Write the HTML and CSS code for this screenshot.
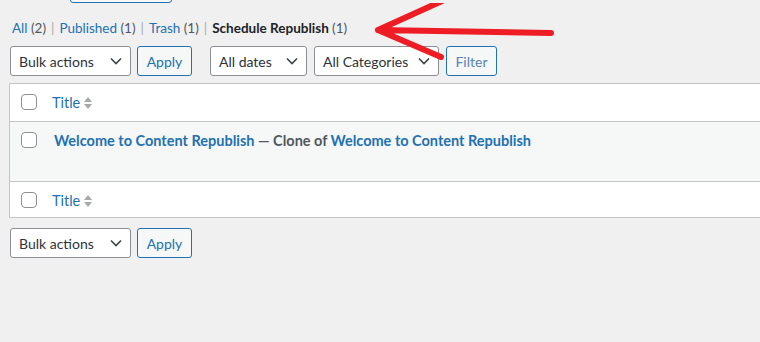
FILE: index.html
```html
<!DOCTYPE html>
<html lang="en">
<head>
  <meta charset="UTF-8">
  <title>Posts</title>
  <link rel="stylesheet" href="styles.css">
</head>
<body>

<div class="wrap">
  <div class="top-btn"></div>

  <div class="views-row">
    <ul class="views">
      <li><a href="#">All <span class="count">(2)</span></a><span class="sep">|</span></li>
      <li><a href="#">Published <span class="count">(1)</span></a><span class="sep">|</span></li>
      <li><a href="#">Trash <span class="count">(1)</span></a><span class="sep">|</span></li>
      <li><a href="#" class="current">Schedule Republish <span class="count">(1)</span></a></li>
    </ul>
    <svg class="arrow" width="190" height="60" viewBox="0 0 190 60">
      <path d="M8 27 L72 -2 M8 27 L181 30 M8 27 L71 54" fill="none" stroke="#ee1d25" stroke-width="6" stroke-linecap="round" stroke-linejoin="round"/>
    </svg>
  </div>

  <div class="tablenav">
    <div class="select w120">Bulk actions <span class="chev"><svg width="12" height="8" viewBox="0 0 12 8"><path d="M1 1.5 L6 6.5 L11 1.5" fill="none" stroke="#3c434a" stroke-width="1.6"/></svg></span></div>
    <button class="btn">Apply</button>
    <div class="select w96 ml">All dates <span class="chev"><svg width="12" height="8" viewBox="0 0 12 8"><path d="M1 1.5 L6 6.5 L11 1.5" fill="none" stroke="#3c434a" stroke-width="1.6"/></svg></span></div>
    <div class="select w124">All Categories <span class="chev"><svg width="12" height="8" viewBox="0 0 12 8"><path d="M1 1.5 L6 6.5 L11 1.5" fill="none" stroke="#3c434a" stroke-width="1.6"/></svg></span></div>
    <button class="btn btn-filter">Filter</button>
  </div>

  <div class="list">
    <div class="row head">
      <span class="cb"></span>
      <a href="#" class="col-title">Title <svg class="sort" width="8" height="14" viewBox="0 0 8 14"><path d="M4 1 L8 6 L0 6 Z M0 8 L8 8 L4 13 Z" fill="#a7aaad"/></svg></a>
    </div>
    <div class="row item">
      <span class="cb"></span>
      <div class="post-title"><a href="#">Welcome to Content Republish</a> — Clone of <a href="#">Welcome to Content Republish</a></div>
    </div>
    <div class="row foot">
      <span class="cb"></span>
      <a href="#" class="col-title">Title <svg class="sort" width="8" height="14" viewBox="0 0 8 14"><path d="M4 1 L8 6 L0 6 Z M0 8 L8 8 L4 13 Z" fill="#a7aaad"/></svg></a>
    </div>
  </div>

  <div class="tablenav bottom">
    <div class="select w120">Bulk actions <span class="chev"><svg width="12" height="8" viewBox="0 0 12 8"><path d="M1 1.5 L6 6.5 L11 1.5" fill="none" stroke="#3c434a" stroke-width="1.6"/></svg></span></div>
    <button class="btn">Apply</button>
  </div>
</div>

</body>
</html>
```

FILE: styles.css
```css
body {
  margin: 0;
  background-color: #f0f0f1;
  color: #3c434a;
  font-family: Lato, "Noto Sans", sans-serif;
  font-size: 13px;
  overflow: hidden;
}

a {
  color: #2271b1;
  text-decoration: none;
}

.wrap {
  padding-left: 10px;
  width: 1000px;
}

.top-btn {
  margin-left: 60px;
  margin-top: -27px;
  width: 100px;
  height: 28px;
  border: 1px solid #2271b1;
  border-radius: 3px;
  background-color: #f6f7f7;
}

.views-row {
  position: relative;
  height: 43px;
}

.views {
  list-style: none;
  margin: 0;
  padding: 12px 0 0 2px;
  display: flex;
  line-height: 26px;
  font-size: 13.5px;
  color: #a7aaad;
}

.views .sep {
  margin: 0 5px;
}

.views .count {
  color: #50575e;
}

.views .current {
  color: #1d2327;
  font-weight: 700;
}

.views .current .count {
  font-weight: 400;
}

.arrow {
  position: absolute;
  left: 360px;
  top: 0;
  z-index: 2;
}

.tablenav {
  display: flex;
  height: 30px;
  align-items: center;
}

.select {
  box-sizing: border-box;
  height: 30px;
  border: 1px solid #8c8f94;
  border-radius: 3px;
  background-color: #fff;
  color: #2c3338;
  font-size: 14px;
  padding-left: 8px;
  display: flex;
  align-items: center;
  position: relative;
}

.chev {
  position: absolute;
  right: 8px;
  top: 10px;
  line-height: 0;
}

.w120 { width: 121px; }
.w96 { width: 97px; }
.w124 { width: 125px; margin-left: 7px; }
.ml { margin-left: 18px; }

.btn {
  box-sizing: border-box;
  height: 30px;
  width: 55px;
  margin-left: 6px;
  padding: 0;
  border: 1px solid #2271b1;
  border-radius: 3px;
  background-color: #f6f7f7;
  color: #2271b1;
  font-family: inherit;
  font-size: 14px;
}

.btn-filter {
  width: 51px;
  margin-left: 7px;
  color: #5b83ad;
}

.list {
  margin: 7px 0 0 -1px;
  border: 1px solid #c3c4c7;
  background-color: #fff;
}

.row {
  display: flex;
  align-items: flex-start;
  padding-left: 11px;
}

.head {
  height: 37px;
  border-bottom: 1px solid #c3c4c7;
}

.item {
  height: 59px;
  background-color: #f6f7f7;
  border-bottom: 1px solid #c3c4c7;
}

.foot {
  height: 35px;
}

.cb {
  box-sizing: border-box;
  width: 16px;
  height: 16px;
  border: 1px solid #8c8f94;
  border-radius: 4px;
  background-color: #fff;
}

.head .cb { margin-top: 10px; }
.item .cb { margin-top: 10px; }
.foot .cb { margin-top: 10px; }

.col-title {
  margin-left: 15px;
  font-size: 14.5px;
  line-height: 37px;
  display: flex;
  align-items: center;
  gap: 4px;
}

.post-title {
  margin-left: 17px;
  margin-top: 10px;
  font-size: 14.5px;
  font-weight: 700;
  color: #50575e;
}

.bottom {
  margin-top: 10px;
}
```
